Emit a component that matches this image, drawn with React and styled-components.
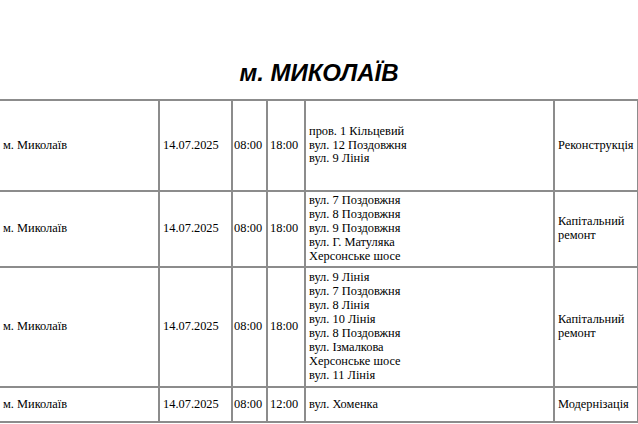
import React from "react";
import styled, { createGlobalStyle } from "styled-components";

const rows = [
  {
    city: "м. Миколаїв",
    date: "14.07.2025",
    from: "08:00",
    to: "18:00",
    streets: ["пров. 1 Кільцевий", "вул. 12 Поздовжня", "вул. 9 Лінія"],
    kind: ["Реконструкція"],
    height: 91,
  },
  {
    city: "м. Миколаїв",
    date: "14.07.2025",
    from: "08:00",
    to: "18:00",
    streets: [
      "вул. 7 Поздовжня",
      "вул. 8 Поздовжня",
      "вул. 9 Поздовжня",
      "вул. Г. Матуляка",
      "Херсонське шосе",
    ],
    kind: ["Капітальний", "ремонт"],
    height: 76,
  },
  {
    city: "м. Миколаїв",
    date: "14.07.2025",
    from: "08:00",
    to: "18:00",
    streets: [
      "вул. 9 Лінія",
      "вул. 7 Поздовжня",
      "вул. 8 Лінія",
      "вул. 10 Лінія",
      "вул. 8 Поздовжня",
      "вул. Ізмалкова",
      "Херсонське шосе",
      "вул. 11 Лінія",
    ],
    kind: ["Капітальний", "ремонт"],
    height: 120,
  },
  {
    city: "м. Миколаїв",
    date: "14.07.2025",
    from: "08:00",
    to: "12:00",
    streets: ["вул. Хоменка"],
    kind: ["Модернізація"],
    height: 35,
  },
];

const columns = [161, 73, 35, 38, 249, 84];

const GlobalStyle = createGlobalStyle`
  html, body {
    margin: 0;
    padding: 0;
    background: #fff;
  }
  body {
    width: 638px;
    height: 424px;
    overflow: hidden;
  }
`;

const Page = styled.div`
  width: 638px;
  height: 424px;
  overflow: hidden;
  display: flex;
  flex-direction: column;
`;

const Title = styled.h1`
  margin: 0;
  height: 99px;
  padding-top: 46px;
  box-sizing: border-box;
  display: flex;
  align-items: center;
  justify-content: center;
  font-family: "Liberation Sans", Arial, sans-serif;
  font-size: 24px;
  font-weight: bold;
  font-style: italic;
  line-height: 1;
  color: #000;
`;

const Table = styled.table`
  border-collapse: collapse;
  table-layout: fixed;
  width: 640px;
  margin-left: -3px;
  font-family: "Liberation Serif", "Times New Roman", serif;
  font-size: 12.4px;
  line-height: 13.9px;
  color: #000;
`;

const Col = styled.col`
  width: ${(p) => p.$w}px;
`;

const Row = styled.tr`
  height: ${(p) => p.$h}px;
`;

const Cell = styled.td`
  border: 2px solid #8c8c8c;
  padding: 0 ${(p) => p.$pad ?? 3}px;
  vertical-align: middle;
  text-align: left;
  white-space: nowrap;
  overflow: hidden;
`;

const Line = styled.div``;

export default function App() {
  return (
    <>
      <GlobalStyle />
      <Page>
        <Title>м. МИКОЛАЇВ</Title>
        <Table>
          <colgroup>
            {columns.map((w, i) => (
              <Col key={i} $w={w} />
            ))}
          </colgroup>
          <tbody>
            {rows.map((r, i) => (
              <Row key={i} $h={r.height}>
                <Cell $pad={4}>{r.city}</Cell>
                <Cell>{r.date}</Cell>
                <Cell $pad={1}>{r.from}</Cell>
                <Cell $pad={2}>{r.to}</Cell>
                <Cell>
                  {r.streets.map((s, j) => (
                    <Line key={j}>{s}</Line>
                  ))}
                </Cell>
                <Cell>
                  {r.kind.map((k, j) => (
                    <Line key={j}>{k}</Line>
                  ))}
                </Cell>
              </Row>
            ))}
          </tbody>
        </Table>
      </Page>
    </>
  );
}
